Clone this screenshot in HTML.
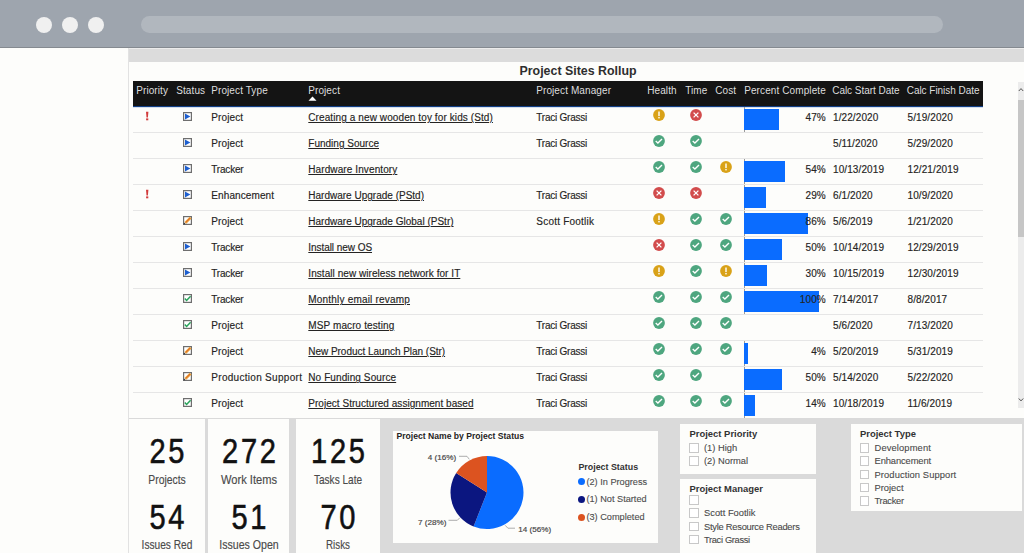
<!DOCTYPE html><html><head><meta charset="utf-8"><style>
*{margin:0;padding:0;box-sizing:border-box}
html,body{width:1024px;height:553px;overflow:hidden;background:#fdfdfb;font-family:"Liberation Sans",sans-serif}
.a{position:absolute}
svg{display:block}
.t{position:absolute;white-space:nowrap;font-size:10px;letter-spacing:0.1px;line-height:12px;color:#252423;-webkit-text-stroke:0.15px #252423}
.h{position:absolute;white-space:nowrap;font-size:10px;letter-spacing:0.1px;line-height:12px;color:#dedede}
.num{text-align:center;font-size:35px;line-height:38px;color:#111;letter-spacing:3.3px;text-indent:3.3px;transform:scaleX(0.83);-webkit-text-stroke:0.6px #111}
.lab{text-align:center;font-size:12.4px;line-height:14px;color:#4a4a4a;-webkit-text-stroke:0.15px #4a4a4a}
.u{text-decoration:underline;text-underline-offset:0.6px;text-decoration-thickness:1px}
</style></head><body>
<div class="a" style="left:0;top:0;width:1024px;height:47px;background:#9ea5ae"></div>
<div class="a" style="left:0;top:47px;width:1024px;height:1px;background:#858a90"></div>
<div class="a" style="left:35.5px;top:16.5px;width:16px;height:16px;border-radius:50%;background:#f0f0f0"></div>
<div class="a" style="left:61.5px;top:16.5px;width:16px;height:16px;border-radius:50%;background:#f0f0f0"></div>
<div class="a" style="left:87.5px;top:16.5px;width:16px;height:16px;border-radius:50%;background:#f0f0f0"></div>
<div class="a" style="left:141px;top:16px;width:802px;height:17px;border-radius:8.5px;background:#b1b7be"></div>
<div class="a" style="left:128px;top:48px;width:1px;height:505px;background:#e2e2e2"></div>
<div class="a" style="left:129px;top:48px;width:895px;height:1px;background:#ececec"></div>
<div class="a" style="left:129px;top:49px;width:895px;height:13px;background:#dcdcdc"></div>
<div class="a" style="left:519.5px;top:62.7px;font-size:12.4px;line-height:16px;font-weight:bold;color:#2e2e2e;white-space:nowrap">Project Sites Rollup</div>
<div class="a" style="left:133px;top:81px;width:850px;height:25px;background:#141414"></div>
<div class="a" style="left:133px;top:106px;width:850px;height:1px;background:#123f85"></div>
<div class="a" style="left:133px;top:107px;width:850px;height:1px;background:#d3deee"></div>
<div class="h" style="left:136.2px;top:85.3px">Priority</div>
<div class="h" style="left:176.2px;top:85.3px">Status</div>
<div class="h" style="left:211.2px;top:85.3px">Project Type</div>
<div class="h" style="left:308.2px;top:85.3px">Project</div>
<div class="h" style="left:536.2px;top:85.3px">Project Manager</div>
<div class="h" style="left:647.2px;top:85.3px">Health</div>
<div class="h" style="left:685.2px;top:85.3px">Time</div>
<div class="h" style="left:715.2px;top:85.3px">Cost</div>
<div class="h" style="left:744.2px;top:85.3px">Percent Complete</div>
<div class="h" style="left:832.2px;top:85.3px;letter-spacing:-0.03px">Calc Start Date</div>
<div class="h" style="left:906.7px;top:85.3px;letter-spacing:-0.03px">Calc Finish Date</div>
<svg class="a" style="left:308px;top:96px" width="9" height="5"><path d="M0.5 4.8 L4.5 0.6 L8.5 4.8 Z" fill="#fff"/></svg>
<svg class="a" style="left:145px;top:111px" width="4" height="10"><path d="M1.0 0.8 L3.4 0.8 L2.9 6.6 L1.5 6.6 Z" fill="#d23c3c"/><rect x="1.1" y="7.4" width="2.2" height="1.9" fill="#d23c3c"/></svg>
<div class="a" style="left:182.6px;top:111.6px;width:9px;height:9px"><svg width="9" height="9" viewBox="0 0 9 9"><rect x="0.6" y="0.6" width="7.8" height="7.8" fill="#fff" stroke="#6e6e6e" stroke-width="1.2"/><path d="M2.0 1.5 L7.4 4.5 L2.0 7.5 Z" fill="#1d5fd0"/></svg></div>
<div class="t" style="left:211.3px;top:112.2px">Project</div>
<div class="t u" style="left:308.3px;top:112.2px">Creating a new wooden toy for kids (Std)</div>
<div class="t" style="left:536.3px;top:112.2px;letter-spacing:-0.236px">Traci Grassi</div>
<div class="a" style="left:652.8px;top:109px;width:12px;height:12px"><svg width="12" height="12" viewBox="0 0 12 12"><circle cx="6" cy="6" r="5.9" fill="#d9a218"/><rect x="5.3" y="2.5" width="1.4" height="4.6" fill="#fff"/><rect x="5.3" y="8.0" width="1.4" height="1.4" fill="#fff"/></svg></div>
<div class="a" style="left:690.2px;top:109px;width:12px;height:12px"><svg width="12" height="12" viewBox="0 0 12 12"><circle cx="6" cy="6" r="5.9" fill="#d24c4c"/><path d="M3.6 3.6 L8.4 8.4 M8.4 3.6 L3.6 8.4" stroke="#fff" stroke-width="1.3"/></svg></div>
<div class="a" style="left:744px;top:107px;width:1px;height:26px;background:#9a9a9a"></div>
<div class="a" style="left:744px;top:109px;width:35.3px;height:21px;background:#0a6cff"></div>
<div class="t" style="right:198.20000000000005px;top:112.2px">47%</div>
<div class="t" style="left:833px;top:112.2px">1/22/2020</div>
<div class="t" style="left:907.5px;top:112.2px">5/19/2020</div>
<div class="a" style="left:133px;top:132px;width:850px;height:1px;background:#e6e6e6"></div>
<div class="a" style="left:182.6px;top:137.6px;width:9px;height:9px"><svg width="9" height="9" viewBox="0 0 9 9"><rect x="0.6" y="0.6" width="7.8" height="7.8" fill="#fff" stroke="#6e6e6e" stroke-width="1.2"/><path d="M2.0 1.5 L7.4 4.5 L2.0 7.5 Z" fill="#1d5fd0"/></svg></div>
<div class="t" style="left:211.3px;top:138.2px">Project</div>
<div class="t u" style="left:308.3px;top:138.2px;letter-spacing:0.008px">Funding Source</div>
<div class="t" style="left:536.3px;top:138.2px;letter-spacing:-0.236px">Traci Grassi</div>
<div class="a" style="left:652.8px;top:135px;width:12px;height:12px"><svg width="12" height="12" viewBox="0 0 12 12"><circle cx="6" cy="6" r="5.9" fill="#4ea67f"/><path d="M2.7 6.0 L4.9 8.0 L9.0 3.9" stroke="#fff" stroke-width="1.35" fill="none"/></svg></div>
<div class="a" style="left:690.2px;top:135px;width:12px;height:12px"><svg width="12" height="12" viewBox="0 0 12 12"><circle cx="6" cy="6" r="5.9" fill="#4ea67f"/><path d="M2.7 6.0 L4.9 8.0 L9.0 3.9" stroke="#fff" stroke-width="1.35" fill="none"/></svg></div>
<div class="t" style="left:833px;top:138.2px">5/11/2020</div>
<div class="t" style="left:907.5px;top:138.2px">5/29/2020</div>
<div class="a" style="left:133px;top:158px;width:850px;height:1px;background:#e6e6e6"></div>
<div class="a" style="left:182.6px;top:163.6px;width:9px;height:9px"><svg width="9" height="9" viewBox="0 0 9 9"><rect x="0.6" y="0.6" width="7.8" height="7.8" fill="#fff" stroke="#6e6e6e" stroke-width="1.2"/><path d="M2.0 1.5 L7.4 4.5 L2.0 7.5 Z" fill="#1d5fd0"/></svg></div>
<div class="t" style="left:211.3px;top:164.2px;letter-spacing:-0.2px">Tracker</div>
<div class="t u" style="left:308.3px;top:164.2px">Hardware Inventory</div>
<div class="a" style="left:652.8px;top:161px;width:12px;height:12px"><svg width="12" height="12" viewBox="0 0 12 12"><circle cx="6" cy="6" r="5.9" fill="#4ea67f"/><path d="M2.7 6.0 L4.9 8.0 L9.0 3.9" stroke="#fff" stroke-width="1.35" fill="none"/></svg></div>
<div class="a" style="left:690.2px;top:161px;width:12px;height:12px"><svg width="12" height="12" viewBox="0 0 12 12"><circle cx="6" cy="6" r="5.9" fill="#4ea67f"/><path d="M2.7 6.0 L4.9 8.0 L9.0 3.9" stroke="#fff" stroke-width="1.35" fill="none"/></svg></div>
<div class="a" style="left:720.3px;top:161px;width:12px;height:12px"><svg width="12" height="12" viewBox="0 0 12 12"><circle cx="6" cy="6" r="5.9" fill="#d9a218"/><rect x="5.3" y="2.5" width="1.4" height="4.6" fill="#fff"/><rect x="5.3" y="8.0" width="1.4" height="1.4" fill="#fff"/></svg></div>
<div class="a" style="left:744px;top:159px;width:1px;height:26px;background:#9a9a9a"></div>
<div class="a" style="left:744px;top:161px;width:40.5px;height:21px;background:#0a6cff"></div>
<div class="t" style="right:198.20000000000005px;top:164.2px">54%</div>
<div class="t" style="left:833px;top:164.2px">10/13/2019</div>
<div class="t" style="left:907.5px;top:164.2px">12/21/2019</div>
<div class="a" style="left:133px;top:184px;width:850px;height:1px;background:#e6e6e6"></div>
<svg class="a" style="left:145px;top:189px" width="4" height="10"><path d="M1.0 0.8 L3.4 0.8 L2.9 6.6 L1.5 6.6 Z" fill="#d23c3c"/><rect x="1.1" y="7.4" width="2.2" height="1.9" fill="#d23c3c"/></svg>
<div class="a" style="left:182.6px;top:189.6px;width:9px;height:9px"><svg width="9" height="9" viewBox="0 0 9 9"><rect x="0.6" y="0.6" width="7.8" height="7.8" fill="#fff" stroke="#6e6e6e" stroke-width="1.2"/><path d="M2.0 1.5 L7.4 4.5 L2.0 7.5 Z" fill="#1d5fd0"/></svg></div>
<div class="t" style="left:211.3px;top:190.2px">Enhancement</div>
<div class="t u" style="left:308.3px;top:190.2px;letter-spacing:0.005px">Hardware Upgrade (PStd)</div>
<div class="t" style="left:536.3px;top:190.2px;letter-spacing:-0.236px">Traci Grassi</div>
<div class="a" style="left:652.8px;top:187px;width:12px;height:12px"><svg width="12" height="12" viewBox="0 0 12 12"><circle cx="6" cy="6" r="5.9" fill="#d24c4c"/><path d="M3.6 3.6 L8.4 8.4 M8.4 3.6 L3.6 8.4" stroke="#fff" stroke-width="1.3"/></svg></div>
<div class="a" style="left:690.2px;top:187px;width:12px;height:12px"><svg width="12" height="12" viewBox="0 0 12 12"><circle cx="6" cy="6" r="5.9" fill="#d24c4c"/><path d="M3.6 3.6 L8.4 8.4 M8.4 3.6 L3.6 8.4" stroke="#fff" stroke-width="1.3"/></svg></div>
<div class="a" style="left:744px;top:185px;width:1px;height:26px;background:#9a9a9a"></div>
<div class="a" style="left:744px;top:187px;width:22.0px;height:21px;background:#0a6cff"></div>
<div class="t" style="right:198.20000000000005px;top:190.2px">29%</div>
<div class="t" style="left:833px;top:190.2px">6/1/2020</div>
<div class="t" style="left:907.5px;top:190.2px">10/9/2020</div>
<div class="a" style="left:133px;top:210px;width:850px;height:1px;background:#e6e6e6"></div>
<div class="a" style="left:182.6px;top:215.6px;width:9px;height:9px"><svg width="9" height="9" viewBox="0 0 9 9"><rect x="0.6" y="0.6" width="7.8" height="7.8" fill="#fff" stroke="#6e6e6e" stroke-width="1.2"/><path d="M2.4 6.9 L7.6 1.6" stroke="#eaa23a" stroke-width="2.6"/><path d="M2.8 6.4 L7.2 2.0" stroke="#dc5a22" stroke-width="0.9"/><path d="M0.6 8.5 L1.0 6.6 L2.6 8.1 Z" fill="#333"/></svg></div>
<div class="t" style="left:211.3px;top:216.2px">Project</div>
<div class="t u" style="left:308.3px;top:216.2px;letter-spacing:0.007px">Hardware Upgrade Global (PStr)</div>
<div class="t" style="left:536.3px;top:216.2px;letter-spacing:0.217px">Scott Footlik</div>
<div class="a" style="left:652.8px;top:213px;width:12px;height:12px"><svg width="12" height="12" viewBox="0 0 12 12"><circle cx="6" cy="6" r="5.9" fill="#d9a218"/><rect x="5.3" y="2.5" width="1.4" height="4.6" fill="#fff"/><rect x="5.3" y="8.0" width="1.4" height="1.4" fill="#fff"/></svg></div>
<div class="a" style="left:690.2px;top:213px;width:12px;height:12px"><svg width="12" height="12" viewBox="0 0 12 12"><circle cx="6" cy="6" r="5.9" fill="#4ea67f"/><path d="M2.7 6.0 L4.9 8.0 L9.0 3.9" stroke="#fff" stroke-width="1.35" fill="none"/></svg></div>
<div class="a" style="left:720.3px;top:213px;width:12px;height:12px"><svg width="12" height="12" viewBox="0 0 12 12"><circle cx="6" cy="6" r="5.9" fill="#4ea67f"/><path d="M2.7 6.0 L4.9 8.0 L9.0 3.9" stroke="#fff" stroke-width="1.35" fill="none"/></svg></div>
<div class="a" style="left:744px;top:211px;width:1px;height:26px;background:#9a9a9a"></div>
<div class="a" style="left:744px;top:213px;width:64.1px;height:21px;background:#0a6cff"></div>
<div class="t" style="right:198.20000000000005px;top:216.2px">86%</div>
<div class="t" style="left:833px;top:216.2px">5/6/2019</div>
<div class="t" style="left:907.5px;top:216.2px">1/21/2020</div>
<div class="a" style="left:133px;top:236px;width:850px;height:1px;background:#e6e6e6"></div>
<div class="a" style="left:182.6px;top:241.6px;width:9px;height:9px"><svg width="9" height="9" viewBox="0 0 9 9"><rect x="0.6" y="0.6" width="7.8" height="7.8" fill="#fff" stroke="#6e6e6e" stroke-width="1.2"/><path d="M2.0 1.5 L7.4 4.5 L2.0 7.5 Z" fill="#1d5fd0"/></svg></div>
<div class="t" style="left:211.3px;top:242.2px;letter-spacing:-0.2px">Tracker</div>
<div class="t u" style="left:308.3px;top:242.2px;letter-spacing:-0.054px">Install new OS</div>
<div class="a" style="left:652.8px;top:239px;width:12px;height:12px"><svg width="12" height="12" viewBox="0 0 12 12"><circle cx="6" cy="6" r="5.9" fill="#d24c4c"/><path d="M3.6 3.6 L8.4 8.4 M8.4 3.6 L3.6 8.4" stroke="#fff" stroke-width="1.3"/></svg></div>
<div class="a" style="left:690.2px;top:239px;width:12px;height:12px"><svg width="12" height="12" viewBox="0 0 12 12"><circle cx="6" cy="6" r="5.9" fill="#4ea67f"/><path d="M2.7 6.0 L4.9 8.0 L9.0 3.9" stroke="#fff" stroke-width="1.35" fill="none"/></svg></div>
<div class="a" style="left:720.3px;top:239px;width:12px;height:12px"><svg width="12" height="12" viewBox="0 0 12 12"><circle cx="6" cy="6" r="5.9" fill="#4ea67f"/><path d="M2.7 6.0 L4.9 8.0 L9.0 3.9" stroke="#fff" stroke-width="1.35" fill="none"/></svg></div>
<div class="a" style="left:744px;top:237px;width:1px;height:26px;background:#9a9a9a"></div>
<div class="a" style="left:744px;top:239px;width:37.5px;height:21px;background:#0a6cff"></div>
<div class="t" style="right:198.20000000000005px;top:242.2px">50%</div>
<div class="t" style="left:833px;top:242.2px">10/14/2019</div>
<div class="t" style="left:907.5px;top:242.2px">12/29/2019</div>
<div class="a" style="left:133px;top:262px;width:850px;height:1px;background:#e6e6e6"></div>
<div class="a" style="left:182.6px;top:267.6px;width:9px;height:9px"><svg width="9" height="9" viewBox="0 0 9 9"><rect x="0.6" y="0.6" width="7.8" height="7.8" fill="#fff" stroke="#6e6e6e" stroke-width="1.2"/><path d="M2.0 1.5 L7.4 4.5 L2.0 7.5 Z" fill="#1d5fd0"/></svg></div>
<div class="t" style="left:211.3px;top:268.2px;letter-spacing:-0.2px">Tracker</div>
<div class="t u" style="left:308.3px;top:268.2px;letter-spacing:0.056px">Install new wireless network for IT</div>
<div class="a" style="left:652.8px;top:265px;width:12px;height:12px"><svg width="12" height="12" viewBox="0 0 12 12"><circle cx="6" cy="6" r="5.9" fill="#d9a218"/><rect x="5.3" y="2.5" width="1.4" height="4.6" fill="#fff"/><rect x="5.3" y="8.0" width="1.4" height="1.4" fill="#fff"/></svg></div>
<div class="a" style="left:690.2px;top:265px;width:12px;height:12px"><svg width="12" height="12" viewBox="0 0 12 12"><circle cx="6" cy="6" r="5.9" fill="#4ea67f"/><path d="M2.7 6.0 L4.9 8.0 L9.0 3.9" stroke="#fff" stroke-width="1.35" fill="none"/></svg></div>
<div class="a" style="left:720.3px;top:265px;width:12px;height:12px"><svg width="12" height="12" viewBox="0 0 12 12"><circle cx="6" cy="6" r="5.9" fill="#d9a218"/><rect x="5.3" y="2.5" width="1.4" height="4.6" fill="#fff"/><rect x="5.3" y="8.0" width="1.4" height="1.4" fill="#fff"/></svg></div>
<div class="a" style="left:744px;top:263px;width:1px;height:26px;background:#9a9a9a"></div>
<div class="a" style="left:744px;top:265px;width:22.7px;height:21px;background:#0a6cff"></div>
<div class="t" style="right:198.20000000000005px;top:268.2px">30%</div>
<div class="t" style="left:833px;top:268.2px">10/15/2019</div>
<div class="t" style="left:907.5px;top:268.2px">12/30/2019</div>
<div class="a" style="left:133px;top:288px;width:850px;height:1px;background:#e6e6e6"></div>
<div class="a" style="left:182.6px;top:293.6px;width:9px;height:9px"><svg width="9" height="9" viewBox="0 0 9 9"><rect x="0.6" y="0.6" width="7.8" height="7.8" fill="#fff" stroke="#6e6e6e" stroke-width="1.2"/><path d="M1.8 4.6 L3.6 6.5 L7.6 2.3" stroke="#28a35a" stroke-width="1.5" fill="none"/></svg></div>
<div class="t" style="left:211.3px;top:294.2px;letter-spacing:-0.2px">Tracker</div>
<div class="t u" style="left:308.3px;top:294.2px;letter-spacing:0.195px">Monthly email revamp</div>
<div class="a" style="left:652.8px;top:291px;width:12px;height:12px"><svg width="12" height="12" viewBox="0 0 12 12"><circle cx="6" cy="6" r="5.9" fill="#4ea67f"/><path d="M2.7 6.0 L4.9 8.0 L9.0 3.9" stroke="#fff" stroke-width="1.35" fill="none"/></svg></div>
<div class="a" style="left:690.2px;top:291px;width:12px;height:12px"><svg width="12" height="12" viewBox="0 0 12 12"><circle cx="6" cy="6" r="5.9" fill="#4ea67f"/><path d="M2.7 6.0 L4.9 8.0 L9.0 3.9" stroke="#fff" stroke-width="1.35" fill="none"/></svg></div>
<div class="a" style="left:720.3px;top:291px;width:12px;height:12px"><svg width="12" height="12" viewBox="0 0 12 12"><circle cx="6" cy="6" r="5.9" fill="#4ea67f"/><path d="M2.7 6.0 L4.9 8.0 L9.0 3.9" stroke="#fff" stroke-width="1.35" fill="none"/></svg></div>
<div class="a" style="left:744px;top:289px;width:1px;height:26px;background:#9a9a9a"></div>
<div class="a" style="left:744px;top:291px;width:74.5px;height:21px;background:#0a6cff"></div>
<div class="t" style="right:198.20000000000005px;top:294.2px">100%</div>
<div class="t" style="left:833px;top:294.2px">7/14/2017</div>
<div class="t" style="left:907.5px;top:294.2px">8/8/2017</div>
<div class="a" style="left:133px;top:314px;width:850px;height:1px;background:#e6e6e6"></div>
<div class="a" style="left:182.6px;top:319.6px;width:9px;height:9px"><svg width="9" height="9" viewBox="0 0 9 9"><rect x="0.6" y="0.6" width="7.8" height="7.8" fill="#fff" stroke="#6e6e6e" stroke-width="1.2"/><path d="M1.8 4.6 L3.6 6.5 L7.6 2.3" stroke="#28a35a" stroke-width="1.5" fill="none"/></svg></div>
<div class="t" style="left:211.3px;top:320.2px">Project</div>
<div class="t u" style="left:308.3px;top:320.2px">MSP macro testing</div>
<div class="t" style="left:536.3px;top:320.2px;letter-spacing:-0.236px">Traci Grassi</div>
<div class="a" style="left:652.8px;top:317px;width:12px;height:12px"><svg width="12" height="12" viewBox="0 0 12 12"><circle cx="6" cy="6" r="5.9" fill="#4ea67f"/><path d="M2.7 6.0 L4.9 8.0 L9.0 3.9" stroke="#fff" stroke-width="1.35" fill="none"/></svg></div>
<div class="a" style="left:690.2px;top:317px;width:12px;height:12px"><svg width="12" height="12" viewBox="0 0 12 12"><circle cx="6" cy="6" r="5.9" fill="#4ea67f"/><path d="M2.7 6.0 L4.9 8.0 L9.0 3.9" stroke="#fff" stroke-width="1.35" fill="none"/></svg></div>
<div class="a" style="left:720.3px;top:317px;width:12px;height:12px"><svg width="12" height="12" viewBox="0 0 12 12"><circle cx="6" cy="6" r="5.9" fill="#4ea67f"/><path d="M2.7 6.0 L4.9 8.0 L9.0 3.9" stroke="#fff" stroke-width="1.35" fill="none"/></svg></div>
<div class="t" style="left:833px;top:320.2px">5/6/2020</div>
<div class="t" style="left:907.5px;top:320.2px">7/13/2020</div>
<div class="a" style="left:133px;top:340px;width:850px;height:1px;background:#e6e6e6"></div>
<div class="a" style="left:182.6px;top:345.6px;width:9px;height:9px"><svg width="9" height="9" viewBox="0 0 9 9"><rect x="0.6" y="0.6" width="7.8" height="7.8" fill="#fff" stroke="#6e6e6e" stroke-width="1.2"/><path d="M2.4 6.9 L7.6 1.6" stroke="#eaa23a" stroke-width="2.6"/><path d="M2.8 6.4 L7.2 2.0" stroke="#dc5a22" stroke-width="0.9"/><path d="M0.6 8.5 L1.0 6.6 L2.6 8.1 Z" fill="#333"/></svg></div>
<div class="t" style="left:211.3px;top:346.2px">Project</div>
<div class="t u" style="left:308.3px;top:346.2px;letter-spacing:-0.036px">New Product Launch Plan (Str)</div>
<div class="t" style="left:536.3px;top:346.2px;letter-spacing:-0.236px">Traci Grassi</div>
<div class="a" style="left:652.8px;top:343px;width:12px;height:12px"><svg width="12" height="12" viewBox="0 0 12 12"><circle cx="6" cy="6" r="5.9" fill="#4ea67f"/><path d="M2.7 6.0 L4.9 8.0 L9.0 3.9" stroke="#fff" stroke-width="1.35" fill="none"/></svg></div>
<div class="a" style="left:690.2px;top:343px;width:12px;height:12px"><svg width="12" height="12" viewBox="0 0 12 12"><circle cx="6" cy="6" r="5.9" fill="#4ea67f"/><path d="M2.7 6.0 L4.9 8.0 L9.0 3.9" stroke="#fff" stroke-width="1.35" fill="none"/></svg></div>
<div class="a" style="left:720.3px;top:343px;width:12px;height:12px"><svg width="12" height="12" viewBox="0 0 12 12"><circle cx="6" cy="6" r="5.9" fill="#4ea67f"/><path d="M2.7 6.0 L4.9 8.0 L9.0 3.9" stroke="#fff" stroke-width="1.35" fill="none"/></svg></div>
<div class="a" style="left:744px;top:341px;width:1px;height:26px;background:#9a9a9a"></div>
<div class="a" style="left:744px;top:343px;width:3.5px;height:21px;background:#0a6cff"></div>
<div class="t" style="right:198.20000000000005px;top:346.2px">4%</div>
<div class="t" style="left:833px;top:346.2px">5/20/2019</div>
<div class="t" style="left:907.5px;top:346.2px">5/31/2019</div>
<div class="a" style="left:133px;top:366px;width:850px;height:1px;background:#e6e6e6"></div>
<div class="a" style="left:182.6px;top:371.6px;width:9px;height:9px"><svg width="9" height="9" viewBox="0 0 9 9"><rect x="0.6" y="0.6" width="7.8" height="7.8" fill="#fff" stroke="#6e6e6e" stroke-width="1.2"/><path d="M2.4 6.9 L7.6 1.6" stroke="#eaa23a" stroke-width="2.6"/><path d="M2.8 6.4 L7.2 2.0" stroke="#dc5a22" stroke-width="0.9"/><path d="M0.6 8.5 L1.0 6.6 L2.6 8.1 Z" fill="#333"/></svg></div>
<div class="t" style="left:211.3px;top:372.2px;letter-spacing:0.294px">Production Support</div>
<div class="t u" style="left:308.3px;top:372.2px">No Funding Source</div>
<div class="t" style="left:536.3px;top:372.2px;letter-spacing:-0.236px">Traci Grassi</div>
<div class="a" style="left:652.8px;top:369px;width:12px;height:12px"><svg width="12" height="12" viewBox="0 0 12 12"><circle cx="6" cy="6" r="5.9" fill="#4ea67f"/><path d="M2.7 6.0 L4.9 8.0 L9.0 3.9" stroke="#fff" stroke-width="1.35" fill="none"/></svg></div>
<div class="a" style="left:690.2px;top:369px;width:12px;height:12px"><svg width="12" height="12" viewBox="0 0 12 12"><circle cx="6" cy="6" r="5.9" fill="#4ea67f"/><path d="M2.7 6.0 L4.9 8.0 L9.0 3.9" stroke="#fff" stroke-width="1.35" fill="none"/></svg></div>
<div class="a" style="left:744px;top:367px;width:1px;height:26px;background:#9a9a9a"></div>
<div class="a" style="left:744px;top:369px;width:37.5px;height:21px;background:#0a6cff"></div>
<div class="t" style="right:198.20000000000005px;top:372.2px">50%</div>
<div class="t" style="left:833px;top:372.2px">5/14/2020</div>
<div class="t" style="left:907.5px;top:372.2px">5/22/2020</div>
<div class="a" style="left:133px;top:392px;width:850px;height:1px;background:#e6e6e6"></div>
<div class="a" style="left:182.6px;top:397.6px;width:9px;height:9px"><svg width="9" height="9" viewBox="0 0 9 9"><rect x="0.6" y="0.6" width="7.8" height="7.8" fill="#fff" stroke="#6e6e6e" stroke-width="1.2"/><path d="M1.8 4.6 L3.6 6.5 L7.6 2.3" stroke="#28a35a" stroke-width="1.5" fill="none"/></svg></div>
<div class="t" style="left:211.3px;top:398.2px">Project</div>
<div class="t u" style="left:308.3px;top:398.2px;letter-spacing:0.035px">Project Structured assignment based</div>
<div class="t" style="left:536.3px;top:398.2px;letter-spacing:-0.236px">Traci Grassi</div>
<div class="a" style="left:652.8px;top:395px;width:12px;height:12px"><svg width="12" height="12" viewBox="0 0 12 12"><circle cx="6" cy="6" r="5.9" fill="#4ea67f"/><path d="M2.7 6.0 L4.9 8.0 L9.0 3.9" stroke="#fff" stroke-width="1.35" fill="none"/></svg></div>
<div class="a" style="left:690.2px;top:395px;width:12px;height:12px"><svg width="12" height="12" viewBox="0 0 12 12"><circle cx="6" cy="6" r="5.9" fill="#4ea67f"/><path d="M2.7 6.0 L4.9 8.0 L9.0 3.9" stroke="#fff" stroke-width="1.35" fill="none"/></svg></div>
<div class="a" style="left:720.3px;top:395px;width:12px;height:12px"><svg width="12" height="12" viewBox="0 0 12 12"><circle cx="6" cy="6" r="5.9" fill="#4ea67f"/><path d="M2.7 6.0 L4.9 8.0 L9.0 3.9" stroke="#fff" stroke-width="1.35" fill="none"/></svg></div>
<div class="a" style="left:744px;top:393px;width:1px;height:26px;background:#9a9a9a"></div>
<div class="a" style="left:744px;top:395px;width:10.9px;height:21px;background:#0a6cff"></div>
<div class="t" style="right:198.20000000000005px;top:398.2px">14%</div>
<div class="t" style="left:833px;top:398.2px">10/18/2019</div>
<div class="t" style="left:907.5px;top:398.2px">11/6/2019</div>
<div class="a" style="left:133px;top:392px;width:850px;height:1px;background:#e6e6e6"></div>
<div class="a" style="left:1018px;top:82px;width:6px;height:326px;background:#ececec"></div>
<div class="a" style="left:1018px;top:100px;width:6px;height:137px;background:#c6c6c6"></div>
<svg class="a" style="left:1018px;top:86px" width="6" height="8"><path d="M0.8 5 L3 2.6 L5.2 5" stroke="#555" stroke-width="1" fill="none"/></svg>
<svg class="a" style="left:1018px;top:396px" width="6" height="8"><path d="M0.8 2.5 L3 4.9 L5.2 2.5" stroke="#555" stroke-width="1" fill="none"/></svg>
<div class="a" style="left:129px;top:418px;width:895px;height:135px;background:#dadada"></div>
<div class="a" style="left:129px;top:419px;width:75.5px;height:134px;background:#fdfdfb"></div>
<div class="a num" style="left:106.6px;top:432px;width:120px">25</div>
<div class="a num" style="left:106.6px;top:498px;width:120px">54</div>
<div class="a lab" style="left:106.6px;top:472.6px;width:120px;transform:scaleX(0.837)">Projects</div>
<div class="a lab" style="left:106.6px;top:538.1px;width:120px;transform:scaleX(0.819)">Issues Red</div>
<div class="a" style="left:208.4px;top:419px;width:81.1px;height:134px;background:#fdfdfb"></div>
<div class="a num" style="left:189.3px;top:432px;width:120px">272</div>
<div class="a num" style="left:189.3px;top:498px;width:120px">51</div>
<div class="a lab" style="left:189.3px;top:472.6px;width:120px;transform:scaleX(0.897)">Work Items</div>
<div class="a lab" style="left:189.3px;top:538.1px;width:120px;transform:scaleX(0.855)">Issues Open</div>
<div class="a" style="left:296px;top:419px;width:84px;height:134px;background:#fdfdfb"></div>
<div class="a num" style="left:278.3px;top:432px;width:120px">125</div>
<div class="a num" style="left:278.3px;top:498px;width:120px">70</div>
<div class="a lab" style="left:278.3px;top:472.6px;width:120px;transform:scaleX(0.811)">Tasks Late</div>
<div class="a lab" style="left:278.3px;top:538.1px;width:120px;transform:scaleX(0.79)">Risks</div>
<div class="a" style="left:393px;top:431px;width:265px;height:112px;background:#fdfdfb"></div>
<div class="a" style="left:396.5px;top:430px;font-size:8.6px;line-height:12px;font-weight:bold;color:#252423;white-space:nowrap">Project Name by Project Status</div>
<svg class="a" style="left:0;top:0" width="1024" height="553"><path d="M487 492.5 L487.00 456.00 A36.5 36.5 0 1 1 473.56 526.44 Z" fill="#0a6cff"/><path d="M487 492.5 L473.56 526.44 A36.5 36.5 0 0 1 456.18 472.94 Z" fill="#0b1680"/><path d="M487 492.5 L456.18 472.94 A36.5 36.5 0 0 1 487.00 456.00 Z" fill="#dc5320"/><path d="M459 456.3 L467 456.3 L469.3 459.3" stroke="#999" stroke-width="0.8" fill="none"/><path d="M448.5 520.3 L457.3 520.3 L459.8 517.8" stroke="#999" stroke-width="0.8" fill="none"/><path d="M505.2 525.3 L507.9 528.2 L515 528.2" stroke="#999" stroke-width="0.8" fill="none"/></svg>
<div class="a" style="left:427.8px;top:451.5px;font-size:8.1px;line-height:12px;color:#4a4a4a;white-space:nowrap;-webkit-text-stroke:0.2px #4a4a4a">4 (16%)</div>
<div class="a" style="left:418px;top:517px;font-size:8.1px;line-height:12px;color:#4a4a4a;white-space:nowrap;-webkit-text-stroke:0.2px #4a4a4a">7 (28%)</div>
<div class="a" style="left:518.3px;top:524.3px;font-size:8.1px;line-height:12px;color:#4a4a4a;white-space:nowrap;-webkit-text-stroke:0.2px #4a4a4a">14 (56%)</div>
<div class="a" style="left:578.4px;top:461px;font-size:8.9px;line-height:12px;font-weight:bold;color:#333;white-space:nowrap">Project Status</div>
<div class="a" style="left:577.5px;top:478.3px;width:7px;height:7px;border-radius:50%;background:#0a6cff"></div>
<div class="a" style="left:586.4px;top:475.6px;font-size:9.2px;line-height:12px;color:#4e4e4e;white-space:nowrap;-webkit-text-stroke:0.12px #4e4e4e">(2) In Progress</div>
<div class="a" style="left:577.5px;top:495.9px;width:7px;height:7px;border-radius:50%;background:#0b1680"></div>
<div class="a" style="left:586.4px;top:493.2px;font-size:9.2px;line-height:12px;color:#4e4e4e;white-space:nowrap;-webkit-text-stroke:0.12px #4e4e4e">(1) Not Started</div>
<div class="a" style="left:577.5px;top:513.5px;width:7px;height:7px;border-radius:50%;background:#dc5320"></div>
<div class="a" style="left:586.4px;top:510.8px;font-size:9.2px;line-height:12px;color:#4e4e4e;white-space:nowrap;-webkit-text-stroke:0.12px #4e4e4e">(3) Completed</div>
<div class="a" style="left:680px;top:424px;width:136px;height:50px;background:#fdfdfb"></div>
<div class="a" style="left:689.5px;top:427.7px;font-size:9.45px;line-height:12px;font-weight:bold;color:#333;white-space:nowrap">Project Priority</div>
<div class="a" style="left:689.2px;top:443.3px;width:9.5px;height:9.5px;border:1px solid #c8c8c8;background:#fff"></div>
<div class="a" style="left:704.0px;top:442.3px;font-size:9.35px;line-height:12px;color:#4a4a4a;white-space:nowrap;-webkit-text-stroke:0.1px #4a4a4a">(1) High</div>
<div class="a" style="left:689.2px;top:456.3px;width:9.5px;height:9.5px;border:1px solid #c8c8c8;background:#fff"></div>
<div class="a" style="left:704.0px;top:455.3px;font-size:9.35px;line-height:12px;color:#4a4a4a;white-space:nowrap;-webkit-text-stroke:0.1px #4a4a4a">(2) Normal</div>
<div class="a" style="left:680px;top:479px;width:136px;height:74px;background:#fdfdfb"></div>
<div class="a" style="left:689.5px;top:482.7px;font-size:9.45px;line-height:12px;font-weight:bold;color:#333;white-space:nowrap">Project Manager</div>
<div class="a" style="left:689.2px;top:495.4px;width:9.5px;height:9.5px;border:1px solid #c8c8c8;background:#fff"></div>
<div class="a" style="left:689.2px;top:508.44999999999993px;width:9.5px;height:9.5px;border:1px solid #c8c8c8;background:#fff"></div>
<div class="a" style="left:704.0px;top:507.44999999999993px;font-size:9.35px;line-height:12px;color:#4a4a4a;white-space:nowrap;-webkit-text-stroke:0.1px #4a4a4a">Scott Footlik</div>
<div class="a" style="left:689.2px;top:521.5px;width:9.5px;height:9.5px;border:1px solid #c8c8c8;background:#fff"></div>
<div class="a" style="left:704.0px;top:520.5px;font-size:9.35px;line-height:12px;color:#4a4a4a;white-space:nowrap;-webkit-text-stroke:0.1px #4a4a4a;letter-spacing:-0.26px">Style Resource Readers</div>
<div class="a" style="left:689.2px;top:534.55px;width:9.5px;height:9.5px;border:1px solid #c8c8c8;background:#fff"></div>
<div class="a" style="left:704.0px;top:533.55px;font-size:9.35px;line-height:12px;color:#4a4a4a;white-space:nowrap;-webkit-text-stroke:0.1px #4a4a4a;letter-spacing:-0.35px">Traci Grassi</div>
<div class="a" style="left:850.5px;top:424px;width:171px;height:86.5px;background:#fdfdfb"></div>
<div class="a" style="left:860.0px;top:427.7px;font-size:9.45px;line-height:12px;font-weight:bold;color:#333;white-space:nowrap">Project Type</div>
<div class="a" style="left:859.7px;top:443.0px;width:9.5px;height:9.5px;border:1px solid #c8c8c8;background:#fff"></div>
<div class="a" style="left:874.5px;top:442.0px;font-size:9.35px;line-height:12px;color:#4a4a4a;white-space:nowrap;-webkit-text-stroke:0.1px #4a4a4a;letter-spacing:0.13px">Development</div>
<div class="a" style="left:859.7px;top:456.25px;width:9.5px;height:9.5px;border:1px solid #c8c8c8;background:#fff"></div>
<div class="a" style="left:874.5px;top:455.25px;font-size:9.35px;line-height:12px;color:#4a4a4a;white-space:nowrap;-webkit-text-stroke:0.1px #4a4a4a;letter-spacing:-0.1px">Enhancement</div>
<div class="a" style="left:859.7px;top:469.5px;width:9.5px;height:9.5px;border:1px solid #c8c8c8;background:#fff"></div>
<div class="a" style="left:874.5px;top:468.5px;font-size:9.35px;line-height:12px;color:#4a4a4a;white-space:nowrap;-webkit-text-stroke:0.1px #4a4a4a;letter-spacing:0.1px">Production Support</div>
<div class="a" style="left:859.7px;top:482.75px;width:9.5px;height:9.5px;border:1px solid #c8c8c8;background:#fff"></div>
<div class="a" style="left:874.5px;top:481.75px;font-size:9.35px;line-height:12px;color:#4a4a4a;white-space:nowrap;-webkit-text-stroke:0.1px #4a4a4a">Project</div>
<div class="a" style="left:859.7px;top:496.0px;width:9.5px;height:9.5px;border:1px solid #c8c8c8;background:#fff"></div>
<div class="a" style="left:874.5px;top:495.0px;font-size:9.35px;line-height:12px;color:#4a4a4a;white-space:nowrap;-webkit-text-stroke:0.1px #4a4a4a;letter-spacing:-0.28px">Tracker</div>
</body></html>
